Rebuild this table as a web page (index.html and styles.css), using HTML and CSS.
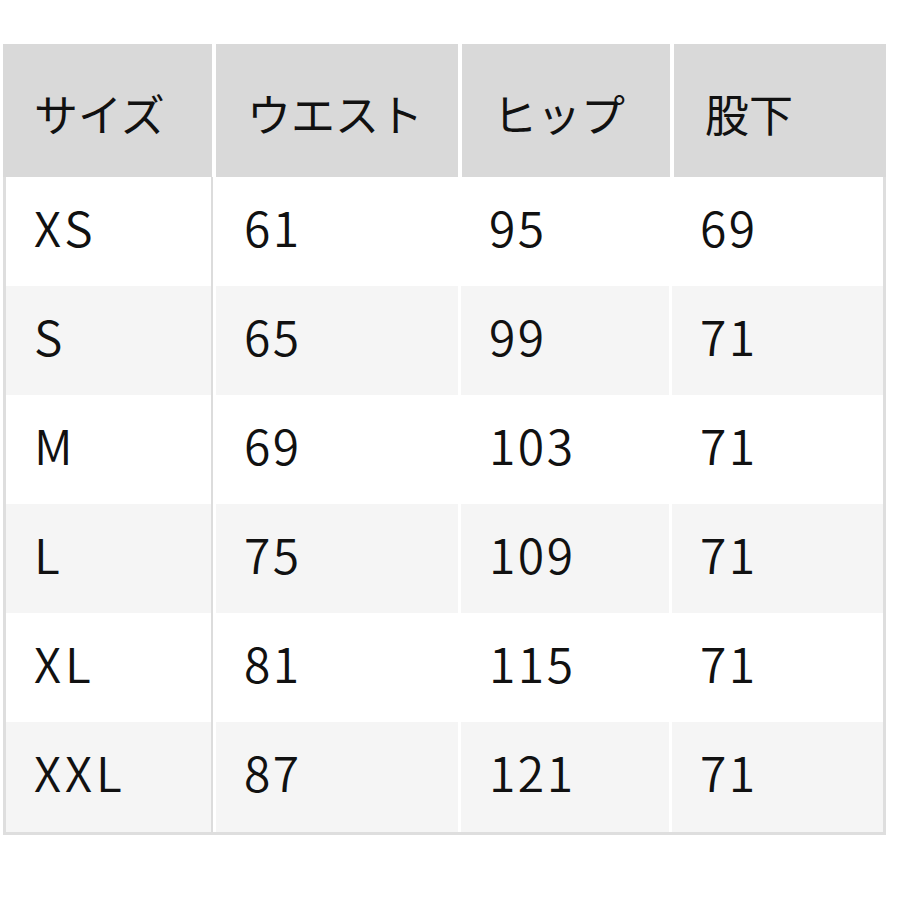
FILE: index.html
```html
<!DOCTYPE html>
<html lang="ja">
<head>
<meta charset="utf-8">
<link rel="stylesheet" href="styles.css">
</head>
<body>
<div class="table">
  <div class="row head">
    <div class="cell">サイズ</div>
    <div class="cell">ウエスト</div>
    <div class="cell">ヒップ</div>
    <div class="cell">股下</div>
  </div>
  <div class="row">
    <div class="cell first">XS</div><div class="cell">61</div><div class="cell">95</div><div class="cell">69</div>
  </div>
  <div class="row alt">
    <div class="cell first">S</div><div class="cell">65</div><div class="cell">99</div><div class="cell">71</div>
  </div>
  <div class="row">
    <div class="cell first">M</div><div class="cell">69</div><div class="cell">103</div><div class="cell">71</div>
  </div>
  <div class="row alt">
    <div class="cell first">L</div><div class="cell">75</div><div class="cell">109</div><div class="cell">71</div>
  </div>
  <div class="row">
    <div class="cell first">XL</div><div class="cell">81</div><div class="cell">115</div><div class="cell">71</div>
  </div>
  <div class="row alt last">
    <div class="cell first">XXL</div><div class="cell">87</div><div class="cell">121</div><div class="cell">71</div>
  </div>
</div>
</body>
</html>
```

FILE: styles.css
```css
html, body {
  margin: 0;
  padding: 0;
  background: #fff;
}
body {
  font-family: "Noto Sans CJK JP", "Noto Sans", sans-serif;
  color: #111;
}
.table {
  margin: 44px 0 0 3px;
  width: 877px;
  border: 3px solid #dedede;
  border-top: 0;
  background: #fff;
}
.row {
  display: grid;
  grid-template-columns: 207px 242px 208px 1fr;
  column-gap: 3px;
  height: 109px;
}
.row.last {
  height: 110px;
}
.row.head {
  margin: 0 -3px;
  height: 133px;
  grid-template-columns: 209px 242px 208px 1fr;
  column-gap: 4px;
}
.cell {
  display: flex;
  align-items: center;
  padding-left: 28px;
  padding-bottom: 12px;
  font-size: 48px;
  font-weight: 350;
  line-height: 1;
  letter-spacing: 2.5px;
}
.cell.first {
  letter-spacing: 4px;
  border-right: 2px solid #dcdcdc;
}
.head .cell {
  background: #d9d9d9;
  font-size: 44px;
  font-weight: 400;
  padding-left: 31px;
  padding-top: 4px;
  padding-bottom: 0;
  letter-spacing: 0;
}
.alt .cell {
  background: #f5f5f5;
}
```
